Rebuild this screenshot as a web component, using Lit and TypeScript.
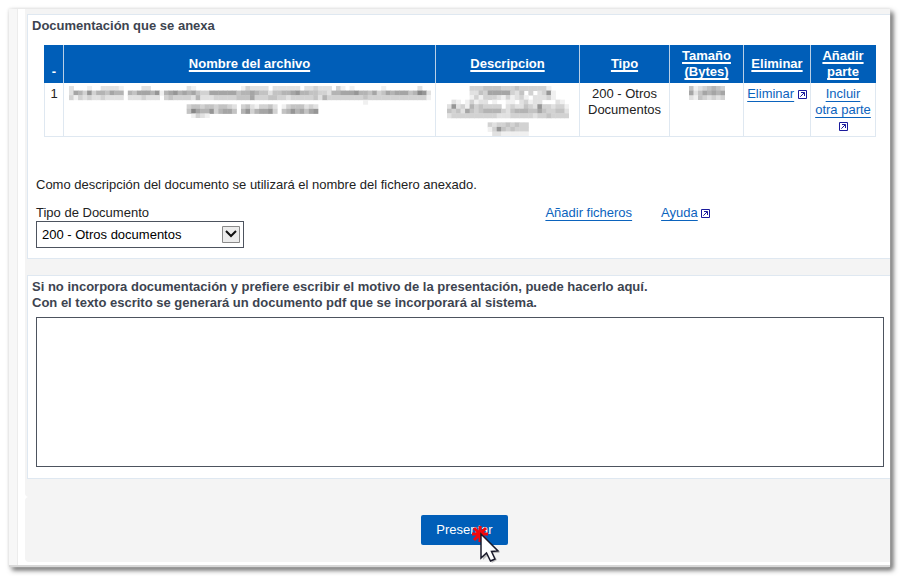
import { LitElement, html, svg, css } from "lit";
import { customElement, property } from "lit/decorators.js";

// Each digit is one mosaic cell, from 0 (clear) to 9 (darkest).
const NAME_MOSAIC = [
  "20001002222100002200000000210000000000132222022222202232220310100000010000000200",
  "26537355465505466657156756564336666664556544244556755443325566675546346566645872",
  "31323223222202223222034333325222333334446333443323333342533333333433333333333331",
  "00000000000000000000000000000000000000000000000000000000000000000100000000000000",
  "00000000000000000000000000344344344320342133420134442320000000000000000000000000",
  "00000000000000000000000000486557356640573566730457564670000000000000000000000000",
  "00000000000000000000000000013210000000000000000000000000000000000000000000000000",
];
const DESCRIPTION_MOSAIC = [
  "000003334444333433333310000",
  "000002243666663240302371000",
  "000001313332131231022231000",
  "021013122010011023122000210",
  "272315343333023224327332331",
  "434264345555324555446433442",
  "233333333332223333323343333",
  "000000000000000000000000000",
  "000000000323343433000000000",
  "000000000137434333000000000",
  "000000000022111111000000000",
];
const SIZE_MOSAIC = ["41234543", "62465656", "21432323"];

@customElement("pixel-mosaic")
class PixelMosaic extends LitElement {
  @property({ attribute: false }) rows: string[] = [];

  static styles = css`
    :host { display: block; }
    .mosaic { display: block; margin: 0 auto; }
  `;

  render() {
    const w = this.rows[0]?.length ?? 0;
    const h = this.rows.length;
    return html`<svg class="mosaic" aria-hidden="true" width=${Math.round(w * 4.53)} height=${Math.round(h * 4.5)}
      viewBox="0 0 ${w} ${h}" preserveAspectRatio="none">
      ${this.rows.flatMap((row, y) => [...row].map((d, x) => {
        const v = 255 - Number(d) * 15;
        return d === "0" ? null : svg`<rect x=${x} y=${y} width="1.1" height="1.1" fill="rgb(${v},${v},${v})"></rect>`;
      }))}
    </svg>`;
  }
}

const popupIcon = html`<svg class="popup" width="9" height="9" viewBox="0 0 9 9" aria-hidden="true">
  <path d="M.5 .5H8.5V8.5H.5Z" fill="#fff" stroke="#1a1a9c"/>
  <path d="M3 2.5H6.500V6M6.300 2.700L2.300 6.700" fill="none" stroke="#1a1a9c"/>
</svg>`;

@customElement("app-root")
class AppRoot extends LitElement {
  static styles = css`
    :host {
      display: block;
      padding: 9px 10px 10px 9px;
      background: #fff;
      color: #222;
      font: 13px/16px "Liberation Sans", Arial, sans-serif;
    }
    * { box-sizing: border-box; }
    .window {
      padding-left: 8px;
      background: #f7f7f7;
      border-bottom: 2px solid #d8d8d8;
      box-shadow: 0 0 3px #ddd, 3px 3px 5px #555;
    }
    .page {
      padding: 0 0 3px 7px;
      background: #fff;
      border-left: 1px solid #ececec;
    }
    .area {
      padding: 5px 0 18px 2px;
      background: #f4f4f4;
      border-radius: 0 0 0 4px;
    }
    .panel {
      margin: 0 0 16px;
      padding: 3px 5px 10px 4px;
      border: 1px solid #dfe8f1;
      border-right: 0;
      background: #fff;
    }
    .panel:last-child { margin: 0; padding-bottom: 11px; }
    .title {
      margin: 0;
      color: #3d4450;
      font-size: 13px;
      font-weight: bold;
    }
    .files {
      width: calc(100% - 21px);
      margin: 11px 9px 40px 12px;
      border-collapse: collapse;
      table-layout: fixed;
      text-align: center;
    }
    .files th {
      height: 38px;
      padding: 0;
      border: 1px solid #b9cfe6;
      border-width: 0 1px;
      background: #005eb8;
      color: #fff;
    }
    .files th:first-child { padding-bottom: 3px; vertical-align: bottom; border-left-color: #005eb8; }
    .files th:last-child { border-right-color: #005eb8; }
    .files td {
      height: 53px;
      padding: 3px 0 0;
      border: 1px solid #dfe8f1;
      border-top: 0;
      vertical-align: top;
    }
    .files td:last-child { padding: 3px 3px 0; }
    .c-num { width: 19px; }
    .c-desc { width: 144px; }
    .c-type { width: 90px; }
    .c-size { width: 74px; }
    .c-del { width: 67px; }
    .c-add { width: 65px; }
    a {
      color: #0b63bd;
      text-decoration: underline;
      text-decoration-thickness: 1px;
      text-underline-offset: 3px;
      text-decoration-skip-ink: none;
    }
    th a { color: #fff; text-underline-offset: 2px; text-decoration-thickness: 2px; }
    .popup { vertical-align: -1px; }
    .note { margin: 0 0 12px 4px; }
    .row { display: grid; grid-template-columns: 60% 1fr; margin-left: 4px; }
    .links { display: flex; gap: 29px; }
    .field { display: block; }
    .selectbox { display: inline-grid; align-items: center; width: 208px; }
    .select {
      grid-area: 1 / 1;
      width: 100%;
      height: 27px;
      padding: 0 24px 0 5px;
      appearance: none;
      border: 1px solid #4d535e;
      border-radius: 0;
      background: #fff;
      color: #000;
      font: inherit;
    }
    .arrow { grid-area: 1 / 1; justify-self: end; margin-right: 4px; pointer-events: none; }
    .reason {
      display: block;
      width: calc(100% - 5px);
      height: 150px;
      margin: 6px 0 0 4px;
      border: 1px solid #4d535e;
      border-radius: 0;
      background: #fff;
      font: inherit;
      resize: none;
    }
    .actions {
      display: flex;
      justify-content: center;
      padding: 18px 0 17px 14px;
      background: #f4f4f4;
      border-radius: 4px 0 0 4px;
    }
    .submit {
      position: relative;
      height: 30px;
      padding: 0 15px;
      border: 0;
      border-radius: 2px;
      background: #005eb8;
      color: #fff;
      font: inherit;
    }
    .pointer { position: absolute; left: 50px; top: 10px; }
  `;

  render() {
    return html`<div class="window"><main class="page">
      <div class="area">
        <section class="panel">
          <h2 class="title">Documentación que se anexa</h2>
          <table class="files">
            <colgroup>
              <col class="c-num"><col><col class="c-desc"><col class="c-type"><col class="c-size"><col class="c-del"><col class="c-add">
            </colgroup>
            <thead><tr>
              <th>-</th>
              ${["Nombre del archivo", "Descripcion", "Tipo", "Tamaño (Bytes)", "Eliminar", "Añadir parte"].map(
                (t) => html`<th><a href="#">${t}</a></th>`)}
            </tr></thead>
            <tbody><tr>
              <td>1</td>
              <td><pixel-mosaic .rows=${NAME_MOSAIC}></pixel-mosaic></td>
              <td><pixel-mosaic .rows=${DESCRIPTION_MOSAIC}></pixel-mosaic></td>
              <td>200 - Otros Documentos</td>
              <td><pixel-mosaic .rows=${SIZE_MOSAIC}></pixel-mosaic></td>
              <td><a href="#">Eliminar</a> ${popupIcon}</td>
              <td><a href="#">Incluir otra parte</a> ${popupIcon}</td>
            </tr></tbody>
          </table>
          <p class="note">Como descripción del documento se utilizará el nombre del fichero anexado.</p>
          <div class="row">
            <div>
              <label class="field" for="tipo">Tipo de Documento</label>
              <div class="selectbox">
                <select class="select" id="tipo"><option>200 - Otros documentos</option></select>
                <svg class="arrow" width="18" height="17" viewBox="0 0 18 17" aria-hidden="true">
                  <path d="M.5 .5H17.5V16.5H.5Z" fill="#ececec" stroke="#8a8a8a"/>
                  <path d="M4 5L9 10L14 5" fill="none" stroke="#111" stroke-width="2"/>
                </svg>
              </div>
            </div>
            <div class="links">
              <a href="#">Añadir ficheros</a>
              <span><a href="#">Ayuda</a> ${popupIcon}</span>
            </div>
          </div>
        </section>
        <section class="panel">
          <label class="title" for="motivo">Si no incorpora documentación y prefiere escribir el motivo de la presentación, puede hacerlo aquí.<br>Con el texto escrito se generará un documento pdf que se incorporará al sistema.</label>
          <textarea class="reason" id="motivo"></textarea>
        </section>
      </div>
      <div class="actions">
        <button class="submit" type="button">Presentar
          <svg class="pointer" width="30" height="38" viewBox="0 0 30 38" aria-hidden="true">
            <path d="M9 1V17M1 9H17M3 3L15 15M15 3L3 15" fill="none" stroke="#f3060b" stroke-width="3"/>
            <path d="M12 12V35L17 30L21 38L26 35L22 28H29Z" fill="#000" opacity=".22"/>
            <path d="M10 9V33L15.5 28L19.5 36L24 34L20.5 26.5L27 26Z" fill="#fff" stroke="#1b1b2b" stroke-width="1.5"/>
          </svg>
        </button>
      </div>
    </main></div>`;
  }
}
